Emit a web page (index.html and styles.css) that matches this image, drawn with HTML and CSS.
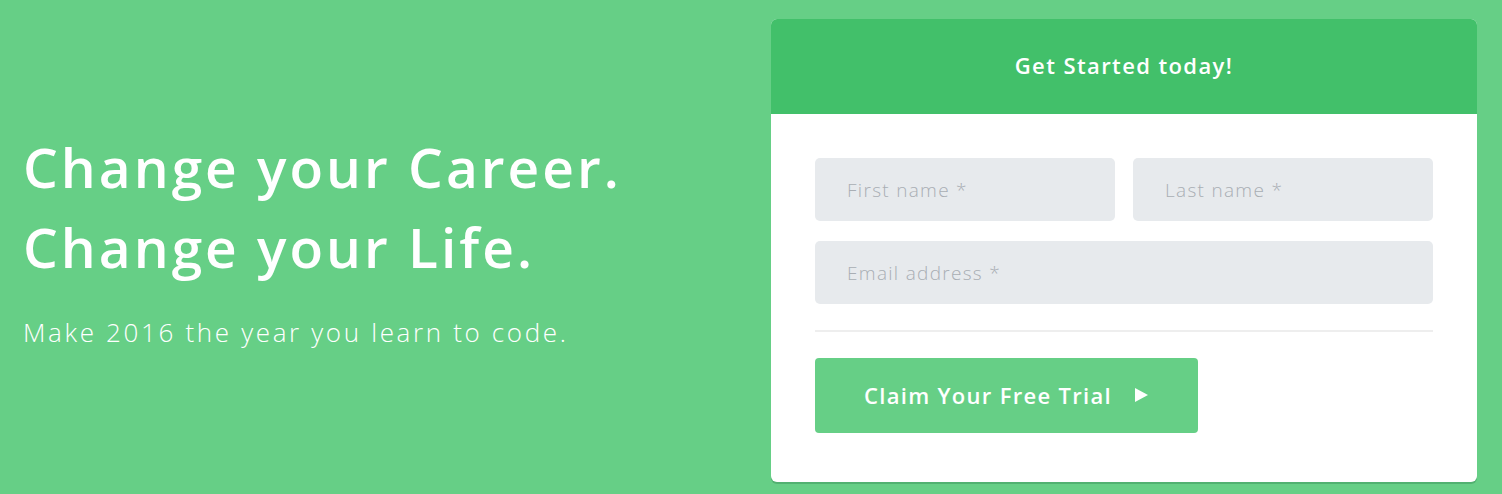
FILE: index.html
```html
<!DOCTYPE html>
<html lang="en">
<head>
<meta charset="utf-8">
<title>Get Started</title>
<link rel="stylesheet" href="styles.css">
</head>
<body>
<main class="hero">
  <section class="intro">
    <h1 class="headline">Change your Career.<br>Change your Life.</h1>
    <p class="tagline">Make 2016 the year you learn to code.</p>
  </section>
  <section class="card">
    <header class="card-head">Get Started today!</header>
    <form class="card-body">
      <div class="row">
        <input class="field" type="text" placeholder="First name *">
        <input class="field" type="text" placeholder="Last name *">
      </div>
      <input class="field field-wide" type="email" placeholder="Email address *">
      <hr class="divider">
      <button class="cta" type="button">Claim Your Free Trial <svg class="arrow" width="15" height="16" viewBox="0 0 15 16"><path d="M1 1 L14 8 L1 15 Z" fill="#fff"/></svg></button>
    </form>
  </section>
</main>
</body>
</html>
```
FILE: styles.css
```css
* { box-sizing: border-box; }
html, body { margin: 0; padding: 0; }
body {
  background: #66cf86;
  font-family: "Open Sans", Lato, sans-serif;
  color: #fff;
  width: 1502px;
  height: 494px;
  overflow: hidden;
}
.hero {
  display: flex;
  justify-content: space-between;
  align-items: flex-start;
  padding: 19px 25px 0 23px;
}
.intro {
  padding-top: 108px;
}
.headline {
  margin: 0;
  font-size: 55px;
  font-weight: 600;
  line-height: 80px;
  letter-spacing: 3px;
}
.tagline {
  margin: 27px 0 0;
  font-size: 26px;
  font-weight: 300;
  letter-spacing: 2.65px;
}
.card {
  width: 706px;
  height: 463px;
  background: #fff;
  border-radius: 6px;
  overflow: hidden;
  box-shadow: 0 2px 0 #52b171;
}
.card-head {
  height: 95px;
  background: #42c06a;
  display: flex;
  align-items: center;
  justify-content: center;
  font-size: 22px;
  font-weight: 600;
  letter-spacing: 1.4px;
  padding-bottom: 4px;
}
.card-body {
  padding: 44px 44px 0;
  display: flex;
  flex-direction: column;
}
.row {
  display: flex;
  gap: 18px;
  margin-bottom: 20px;
}
.field {
  flex: 1 1 0;
  min-width: 0;
  width: 0;
  height: 63px;
  border: 0;
  border-radius: 5px;
  background: #e7eaed;
  padding: 0 32px;
  font-family: inherit;
  font-size: 19px;
  font-weight: 300;
  letter-spacing: 1.3px;
  color: #333;
  outline: none;
}
.field-wide {
  flex: none;
  width: 100%;
}
.field::placeholder { color: #a9aeb4; }
.divider {
  border: 0;
  border-top: 2px solid #eeeeee;
  margin: 26px 0 26px;
  width: 100%;
}
.cta {
  align-self: flex-start;
  width: 383px;
  height: 75px;
  border: 0;
  border-radius: 4px;
  background: #66cf86;
  color: #fff;
  font-family: inherit;
  font-size: 22px;
  font-weight: 600;
  letter-spacing: 1.3px;
  display: flex;
  align-items: center;
  justify-content: center;
  gap: 22px;
  padding-bottom: 2px;
}
.arrow { display: block; }
```
